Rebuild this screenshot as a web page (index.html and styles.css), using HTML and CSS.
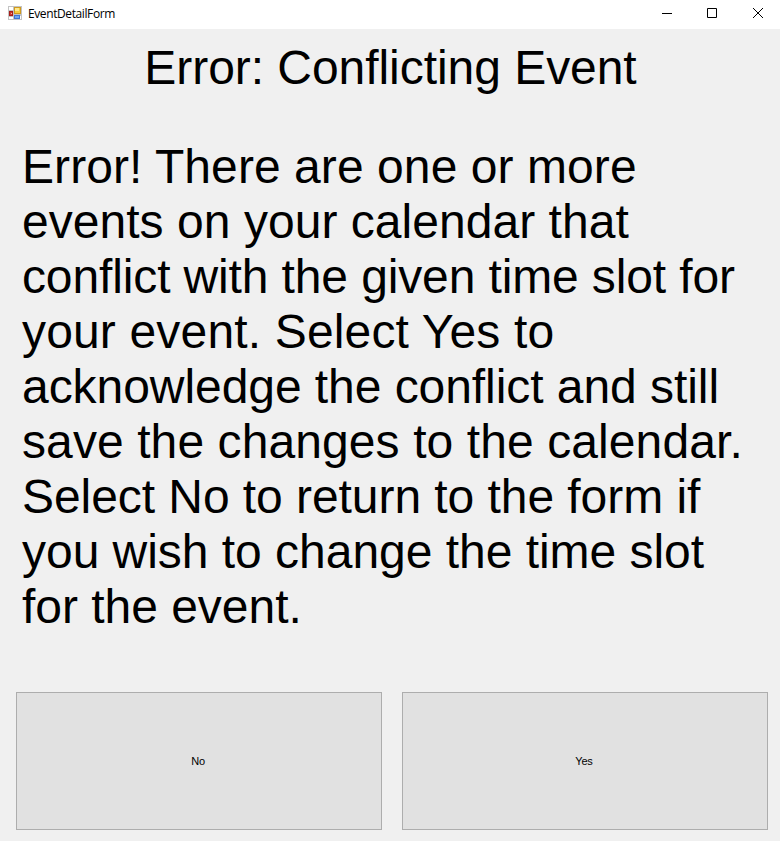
FILE: index.html
```html
<!DOCTYPE html>
<html lang="en">
<head>
<meta charset="utf-8">
<title>EventDetailForm</title>
<link rel="stylesheet" href="styles.css">
</head>
<body>
<div class="window">
  <header class="titlebar">
    <svg class="app-icon" width="16" height="16" viewBox="0 0 16 16">
      <path d="M1 1h14v14H1z" fill="#c3c3c3"/>
      <path d="M2 2h4v3H2zM2 12h4v2H2zM13 11h1v3h-1z" fill="#fff"/>
      <rect x="2.500" y="6.500" width="3" height="4" fill="#d03a30" stroke="#a51d1a"/>
      <rect x="4" y="8" width="1" height="1" fill="#f5b0a0"/>
      <rect x="7.500" y="2.500" width="6" height="6" fill="#f6cc3c" stroke="#cf9a20"/>
      <path d="M8 3h4v3H8z" fill="#ffe88b"/>
      <rect x="7.500" y="10.500" width="5" height="3" fill="#6ca5f2" stroke="#3f75d2"/>
    </svg>
    <span class="caption">EventDetailForm</span>
    <div class="controls">
      <svg width="45" height="28" viewBox="0 0 45 28"><path d="M18 13.500h10" stroke="#000"/></svg>
      <svg width="46" height="28" viewBox="0 0 46 28"><path d="M18.500 8.500h9v9h-9z" fill="none" stroke="#000"/></svg>
      <svg width="45" height="28" viewBox="0 0 45 28"><path d="M18 8l10 10M28 8l-10 10" stroke="#000"/></svg>
    </div>
  </header>
  <main class="form">
    <h1 class="heading">Error: Conflicting Event</h1>
    <p class="message">
      <span class="line wide">Error! There are one or more</span>
      <span class="line slightly-wide">events on your calendar that</span>
      <span class="line tightest">conflict with the given time slot for</span>
      <span class="line widest">your event. Select Yes to</span>
      <span class="line tight">acknowledge the conflict and still</span>
      <span class="line wider">save the changes to the calendar.</span>
      <span class="line tight">Select No to return to the form if</span>
      <span class="line slightly-tight">you wish to change the time slot</span>
      <span class="line slightly-tight">for the event.</span>
    </p>
    <div class="actions">
      <button class="choice">No</button>
      <button class="choice">Yes</button>
    </div>
  </main>
</div>
</body>
</html>
```
FILE: styles.css
```css
* { box-sizing: border-box; }
body { margin: 0; font-family: "Liberation Sans", Arial, sans-serif; color: #000; }
.window { width: 780px; height: 841px; background: #f0f0f0; display: flex; flex-direction: column; overflow: hidden; }
.titlebar { height: 29px; flex: none; background: #fff; display: flex; align-items: flex-start; padding-left: 7px; }
.app-icon { margin-top: 5px; }
.caption { font: 12px/16px "Open Sans", sans-serif; letter-spacing: -0.4px; margin: 6px 0 0 5px; }
.controls { display: flex; margin-left: auto; }
.controls svg { display: block; }
.form { flex: 1; display: flex; flex-direction: column; padding: 11px 12px 11px 16px; }
.heading { margin: 0 3px 0 0; font-size: 48px; line-height: 55px; font-weight: 400; text-align: center; letter-spacing: -0.05px; }
.message { margin: 44px 0 0 6px; font-size: 48px; line-height: 55px; white-space: nowrap; }
.line { display: block; }
.tightest { letter-spacing: -0.13px; }
.tight { letter-spacing: -0.06px; }
.slightly-tight { letter-spacing: -0.03px; }
.slightly-wide { letter-spacing: 0.04px; }
.wide { letter-spacing: 0.07px; }
.wider { letter-spacing: 0.09px; }
.widest { letter-spacing: 0.16px; }
.actions { margin-top: auto; display: grid; grid-template-columns: 366px 366px; gap: 20px; height: 138px; }
.choice { background: #e1e1e1; border: 1px solid #adadad; border-radius: 0; padding: 0 2px 0 0; color: #000; font: 11px/13px "Liberation Sans", Arial, sans-serif; letter-spacing: -0.2px; }
```
